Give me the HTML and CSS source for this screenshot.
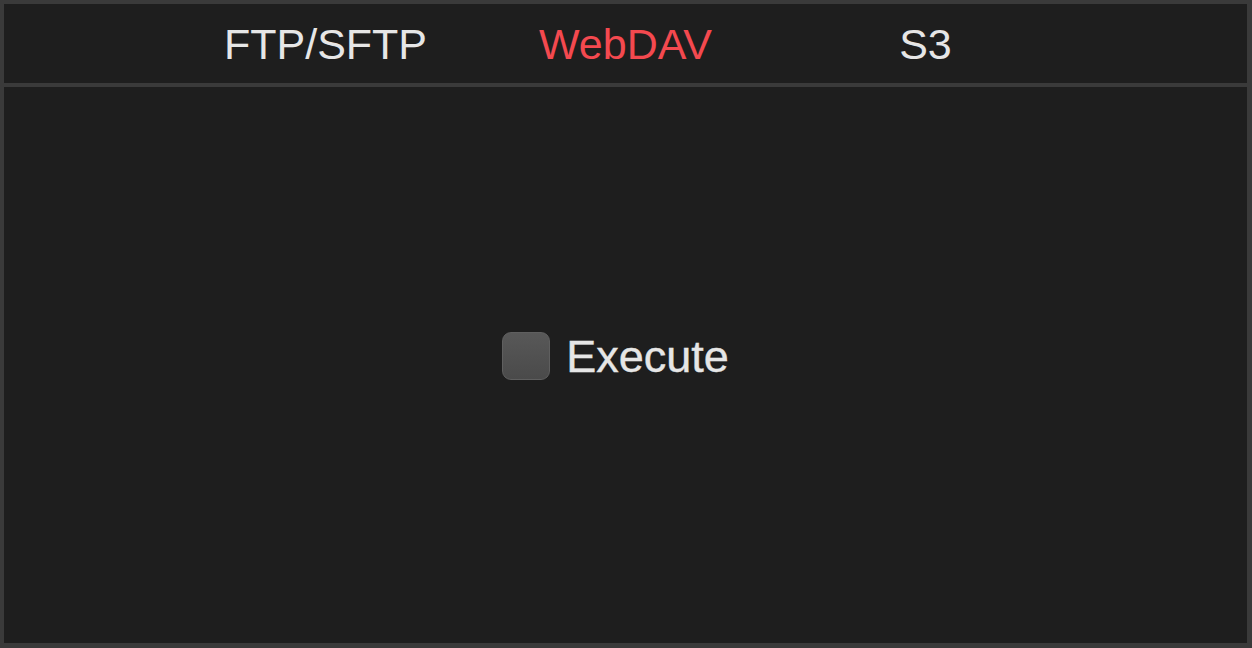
FILE: index.html
```html
<!DOCTYPE html>
<html>
<head>
<meta charset="utf-8">
<link rel="stylesheet" href="styles.css">
</head>
<body>
<div class="frame">
  <nav class="tabs">
    <div class="tab">FTP/SFTP</div>
    <div class="tab active">WebDAV</div>
    <div class="tab">S3</div>
  </nav>
  <main class="content">
    <label class="check">
      <span class="box"></span>
      <span class="label">Execute</span>
    </label>
  </main>
</div>
</body>
</html>
```
FILE: styles.css
```css
html, body {
  margin: 0;
  padding: 0;
  background: #3a3a3a;
}
body {
  width: 1252px;
  height: 648px;
  font-family: "Liberation Sans", Arial, sans-serif;
  overflow: hidden;
}
.frame {
  box-sizing: border-box;
  width: 1252px;
  height: 648px;
  padding: 4px 5px 5px 4px;
  display: flex;
  flex-direction: column;
  gap: 4px;
  background: #3a3a3a;
}
.tabs {
  height: 79px;
  background: #1e1e1e;
  display: flex;
  justify-content: center;
  align-items: center;
}
.tab {
  width: 300px;
  text-align: center;
  font-size: 43px;
  color: #e6e6e6;
  line-height: 1;
  padding-top: 2px;
}
.tab.active {
  color: #f4494f;
}
.content {
  flex: 1;
  background: #1e1e1e;
  display: flex;
  justify-content: center;
  align-items: center;
  padding-bottom: 18px;
}
.check {
  display: flex;
  align-items: center;
  gap: 16px;
  margin-right: 20px;
}
.box {
  box-sizing: border-box;
  width: 48px;
  height: 48px;
  border-radius: 9px;
  border: 1px solid #5f5f5f;
  background: linear-gradient(#585858, #4a4a4a);
}
.label {
  font-size: 45px;
  color: #e6e6e6;
  line-height: 1;
  -webkit-text-stroke: 0.4px #e6e6e6;
}
```
